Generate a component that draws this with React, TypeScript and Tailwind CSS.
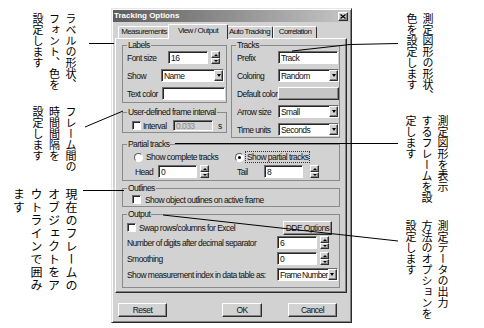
import React from 'react';

const SUNKEN = 'border border-t-[#6c6c6c] border-l-[#6c6c6c] border-r-white border-b-white shadow-[inset_1px_1px_0_#262626]';
const RAISED = 'border border-t-white border-l-white border-r-[#2e2e2e] border-b-[#2e2e2e] shadow-[inset_-1px_-1px_0_#848484]';
const FACE = 'bg-[#d2d2d2]';

const Arrow: React.FC = () => (
    <span className="block h-0 w-0 border-x-[2.5px] border-t-[3px] border-x-transparent border-t-black" />
);

const Spin: React.FC = () => (
    <div className="flex h-[13px] w-[9px] flex-col">
        <div className={`${RAISED} ${FACE} flex h-[7px] items-center justify-center`}>
            <span className="block h-0 w-0 border-x-[2px] border-b-[2px] border-x-transparent border-b-black" />
        </div>
        <div className={`${RAISED} ${FACE} flex h-[6px] items-center justify-center`}>
            <span className="block h-0 w-0 border-x-[2px] border-t-[2px] border-x-transparent border-t-black" />
        </div>
    </div>
);

interface BoxProps {
    value?: string;
    className: string;
    disabled?: boolean;
    textClass?: string;
}

const TextBox: React.FC<BoxProps> = ({ value, className, disabled }) => (
    <div className={`${SUNKEN} flex items-center pl-[2px] ${disabled ? 'bg-[#d2d2d2] text-[#8a8a8a]' : 'bg-white'} ${className}`}>
        {value}
    </div>
);

const Select: React.FC<BoxProps> = ({ value, className, textClass = '' }) => (
    <div className={`${SUNKEN} flex items-center bg-white pl-[2px] ${className}`}>
        <span className={`flex-1 overflow-hidden whitespace-nowrap ${textClass}`}>{value}</span>
        <span className={`${RAISED} ${FACE} flex h-full w-[9px] shrink-0 items-center justify-center`}><Arrow /></span>
    </div>
);

const Check: React.FC = () => <span className={`${SUNKEN} block h-[9px] w-[9px] shrink-0 bg-white`} />;

const Radio: React.FC<{ on?: boolean }> = ({ on }) => (
    <span className="flex h-[9px] w-[9px] shrink-0 items-center justify-center rounded-full border border-t-[#5a5a5a] border-l-[#5a5a5a] border-r-white border-b-white bg-white">
        {on && <span className="h-[3px] w-[3px] rounded-full bg-black" />}
    </span>
);

const Button: React.FC<{ label: string; className?: string }> = ({ label, className = 'w-[49px]' }) => (
    <div className={`${RAISED} ${FACE} flex h-[14px] items-center justify-center ${className}`}>{label}</div>
);

interface GroupProps {
    title: string;
    className: string;
    children?: React.ReactNode;
}

const Group: React.FC<GroupProps> = ({ title, className, children }) => (
    <fieldset className={`min-w-0 border border-[#8a8a8a] ${className}`}>
        <legend className="ml-[4px] px-[1px] leading-[10px]">{title}</legend>
        {children}
    </fieldset>
);

const Row: React.FC<{ label: string; labelW: string; children: React.ReactNode }> = ({ label, labelW, children }) => (
    <div className="flex h-[13px] items-center">
        <span className={`shrink-0 whitespace-nowrap ${labelW}`}>{label}</span>
        {children}
    </div>
);

const Note: React.FC<{ lines: string[]; className: string }> = ({ lines, className }) => (
    <div className={`[writing-mode:vertical-rl] whitespace-nowrap [font-family:'Noto_Sans_CJK_JP',sans-serif] ${className}`}>
        {lines.map((l, i) => (
            <React.Fragment key={i}>
                {l}
                {i < lines.length - 1 && <br />}
            </React.Fragment>
        ))}
    </div>
);

const Tab: React.FC<{ label: string; className: string; active?: boolean }> = ({ label, className, active }) => (
    <div
        className={`flex items-start justify-center rounded-t-[2px] border border-b-0 border-t-white border-l-white border-r-[#2e2e2e] ${FACE} ${
            active ? 'relative z-10 -mx-[2px] -mb-[1px] h-[15px] pt-[1px]' : 'h-[12px]'
        } ${className}`}
    >
        <span className="whitespace-nowrap text-[8px] leading-[10px] tracking-[-0.6px]">{label}</span>
    </div>
);

const Dialog: React.FC = () => (
    <div className={`mt-[8px] flex h-[315px] w-[241px] shrink-0 flex-col border border-t-[#e6e6e6] border-l-[#e6e6e6] border-r-[#2a2a2a] border-b-[#2a2a2a] ${FACE} p-[1px] shadow-[inset_1px_1px_0_white,inset_-1px_-1px_0_#808080] [font-family:'Liberation_Sans',Arial,sans-serif] text-[8.5px] leading-[10px] tracking-[-0.55px] text-[#111]`}>
        <div className="flex h-[12px] items-center bg-linear-to-r from-[#5e5e5e] to-[#c6c6c6] pl-[1px] pr-[2px]">
            <span className="text-[8px] font-bold tracking-normal text-white">Tracking Options</span>
            <span className={`${RAISED} ${FACE} ml-auto flex h-[9px] w-[10px] items-center justify-center`}>
                <svg width="6" height="5" viewBox="0 0 6 5">
                    <path d="M0.5 0.5 L5.5 4.5 M5.5 0.5 L0.5 4.5" stroke="#000" strokeWidth="1.2" />
                </svg>
            </span>
        </div>

        <div className="mt-[2px] flex h-[14px] items-end pl-[5px]">
            <Tab label="Measurements" className="w-[52px]" />
            <Tab label="View / Output" className="w-[60px]" active />
            <Tab label="Auto Tracking" className="w-[47px]" />
            <Tab label="Correlation" className="w-[44px]" />
        </div>

        <div className="ml-[2px] flex h-[255px] w-[232px] flex-col border border-t-white border-l-white border-r-[#2a2a2a] border-b-[#2a2a2a] px-[6px] pt-[1px] shadow-[inset_-1px_-1px_0_#808080]">
            <div className="flex items-start gap-[4px]">
                <div className="flex flex-col gap-[4px]">
                    <Group title="Labels" className="h-[63px] w-[105px]">
                        <div className="flex flex-col gap-[5px] pl-[4px] pt-[1px]">
                            <Row label="Font size" labelW="w-[41px]">
                                <TextBox value="16" className="h-[13px] w-[40px]" />
                                <div className="ml-[3px]"><Spin /></div>
                            </Row>
                            <Row label="Show" labelW="w-[34px]">
                                <Select value="Name" className="h-[13px] w-[63px]" />
                            </Row>
                            <Row label="Text color" labelW="w-[35px]">
                                <TextBox className="h-[13px] w-[63px]" />
                            </Row>
                        </div>
                    </Group>
                    <Group title="User-defined frame interval" className="h-[26px] w-[105px]">
                        <div className="mt-[3px] flex h-[11px] items-center pl-[9px]">
                            <Check />
                            <span className="ml-[2px] w-[30px]">Interval</span>
                            <TextBox value="0.033" disabled className="h-[11px] w-[40px]" />
                            <span className="ml-[5px]">s</span>
                        </div>
                    </Group>
                </div>
                <Group title="Tracks" className="h-[98px] w-[109px]">
                    <div className="flex flex-col gap-[5px] pl-[5px] pt-[1px]">
                        <Row label="Prefix" labelW="w-[41px]">
                            <TextBox value="Track" className="h-[13px] w-[60px]" />
                        </Row>
                        <Row label="Coloring" labelW="w-[41px]">
                            <Select value="Random" className="h-[13px] w-[61px]" />
                        </Row>
                        <Row label="Default color" labelW="w-[41px]">
                            <div className={`${RAISED} h-[13px] w-[61px] bg-[#c6c6c6]`} />
                        </Row>
                        <Row label="Arrow size" labelW="w-[41px]">
                            <Select value="Small" className="h-[13px] w-[61px]" />
                        </Row>
                        <Row label="Time units" labelW="w-[41px]">
                            <Select value="Seconds" className="h-[13px] w-[61px]" />
                        </Row>
                    </div>
                </Group>
            </div>

            <Group title="Partial tracks" className="mt-[1px] h-[42px] w-[218px]">
                <div className="flex pl-[10px] pt-[3px]">
                    <div className="flex w-[102px] flex-col gap-[3px]">
                        <div className="flex h-[10px] items-center pl-[1px]">
                            <Radio />
                            <span className="ml-[3px] whitespace-nowrap">Show complete tracks</span>
                        </div>
                        <div className="flex h-[13px] items-center pl-[2px]">
                            <span className="w-[23px]">Head</span>
                            <TextBox value="0" className="h-[13px] w-[39px]" />
                            <div className="ml-[3px]"><Spin /></div>
                        </div>
                    </div>
                    <div className="flex flex-col gap-[3px]">
                        <div className="flex h-[10px] items-center">
                            <Radio on />
                            <span className="ml-[1px] whitespace-nowrap border border-dotted border-[#333] px-[1px]">Show partial tracks</span>
                        </div>
                        <div className="flex h-[13px] items-center pl-[2px]">
                            <span className="w-[27px]">Tail</span>
                            <TextBox value="8" className="h-[13px] w-[39px]" />
                            <div className="ml-[7px]"><Spin /></div>
                        </div>
                    </div>
                </div>
            </Group>

            <Group title="Outlines" className="mt-[2px] h-[24px] w-[218px]">
                <div className="mt-[2px] flex h-[9px] items-center pl-[9px]">
                    <Check />
                    <span className="ml-[4px] whitespace-nowrap">Show object outlines on active frame</span>
                </div>
            </Group>

            <Group title="Output" className="mt-[2px] h-[79px] w-[218px]">
                <div className="flex flex-col pl-[4px] pr-[7px]">
                    <div className="mt-[2px] flex h-[13px] items-center">
                        <Check />
                        <span className="ml-[3px] whitespace-nowrap">Swap rows/columns for Excel</span>
                        <Button label="DDE Options" className="ml-auto h-[13px] w-[49px]" />
                    </div>
                    <div className="mt-[2px]">
                        <Row label="Number of digits after decimal separator" labelW="w-[150px]">
                            <TextBox value="6" className="h-[13px] w-[40px]" />
                            <div className="ml-[3px]"><Spin /></div>
                        </Row>
                    </div>
                    <div className="mt-[3px]">
                        <Row label="Smoothing" labelW="w-[150px]">
                            <TextBox value="0" className="h-[13px] w-[40px]" />
                            <div className="ml-[3px]"><Spin /></div>
                        </Row>
                    </div>
                    <div className="mt-[3px]">
                        <Row label="Show measurement index in data table as:" labelW="w-[150px]">
                            <Select value="Frame Number" textClass="tracking-[-0.8px]" className="h-[13px] w-[61px]" />
                        </Row>
                    </div>
                </div>
            </Group>
        </div>

        <div className="mt-[10px] flex items-center pl-[5px]">
            <Button label="Reset" />
            <Button label="OK" className="ml-[55px] w-[40px]" />
            <Button label="Cancel" className="ml-[26px] w-[49px]" />
        </div>
    </div>
);

const App: React.FC = () => (
    <div className="relative flex h-[328px] w-[484px] overflow-hidden bg-white text-black">
        <div className="flex w-[111px] shrink-0 flex-col items-end">
            <Note lines={['ラベルの形状、', 'フォント、色を', '設定します']} className="mr-[32px] mt-[13px] h-[86px] text-[11px] leading-[16.5px]" />
            <Note lines={['フレーム間の', '時間間隔を', '設定します']} className="mr-[32px] mt-[7px] h-[75px] text-[11px] leading-[16.5px]" />
            <Note lines={['現在のフレームの', 'オブジェクトをア', 'ウトラインで囲み', 'ます']} className="mr-[31px] mt-[7px] h-[110px] text-[12px] leading-[17.5px] tracking-[1px]" />
        </div>

        <Dialog />

        <div className="flex flex-1 flex-col items-end">
            <Note lines={['測定図形の形状、', '色を設定します']} className="mr-[48px] mt-[13px] h-[90px] text-[11px] leading-[16px]" />
            <Note lines={['測定図形を表示', 'するフレームを設', '定します']} className="mr-[33px] mt-[12px] h-[90px] text-[11px] leading-[16px]" />
            <Note lines={['測定データの出力', '方法のオプションを', '設定します']} className="mr-[33px] mt-[15px] h-[100px] text-[11px] leading-[16px]" />
        </div>

        <svg className="pointer-events-none absolute inset-0" width="484" height="328" viewBox="0 0 484 328">
            <g stroke="#000" strokeWidth="1" fill="none">
                <line x1="89" y1="43.5" x2="114" y2="43.5" />
                <line x1="85" y1="127" x2="123" y2="111" />
                <line x1="83" y1="190.5" x2="124" y2="190.5" />
                <polyline points="292,51 350,44.5 398,43.5" />
                <line x1="175" y1="143.5" x2="398" y2="143.5" />
                <line x1="163" y1="215" x2="398" y2="241" />
            </g>
        </svg>
    </div>
);

export default App;
